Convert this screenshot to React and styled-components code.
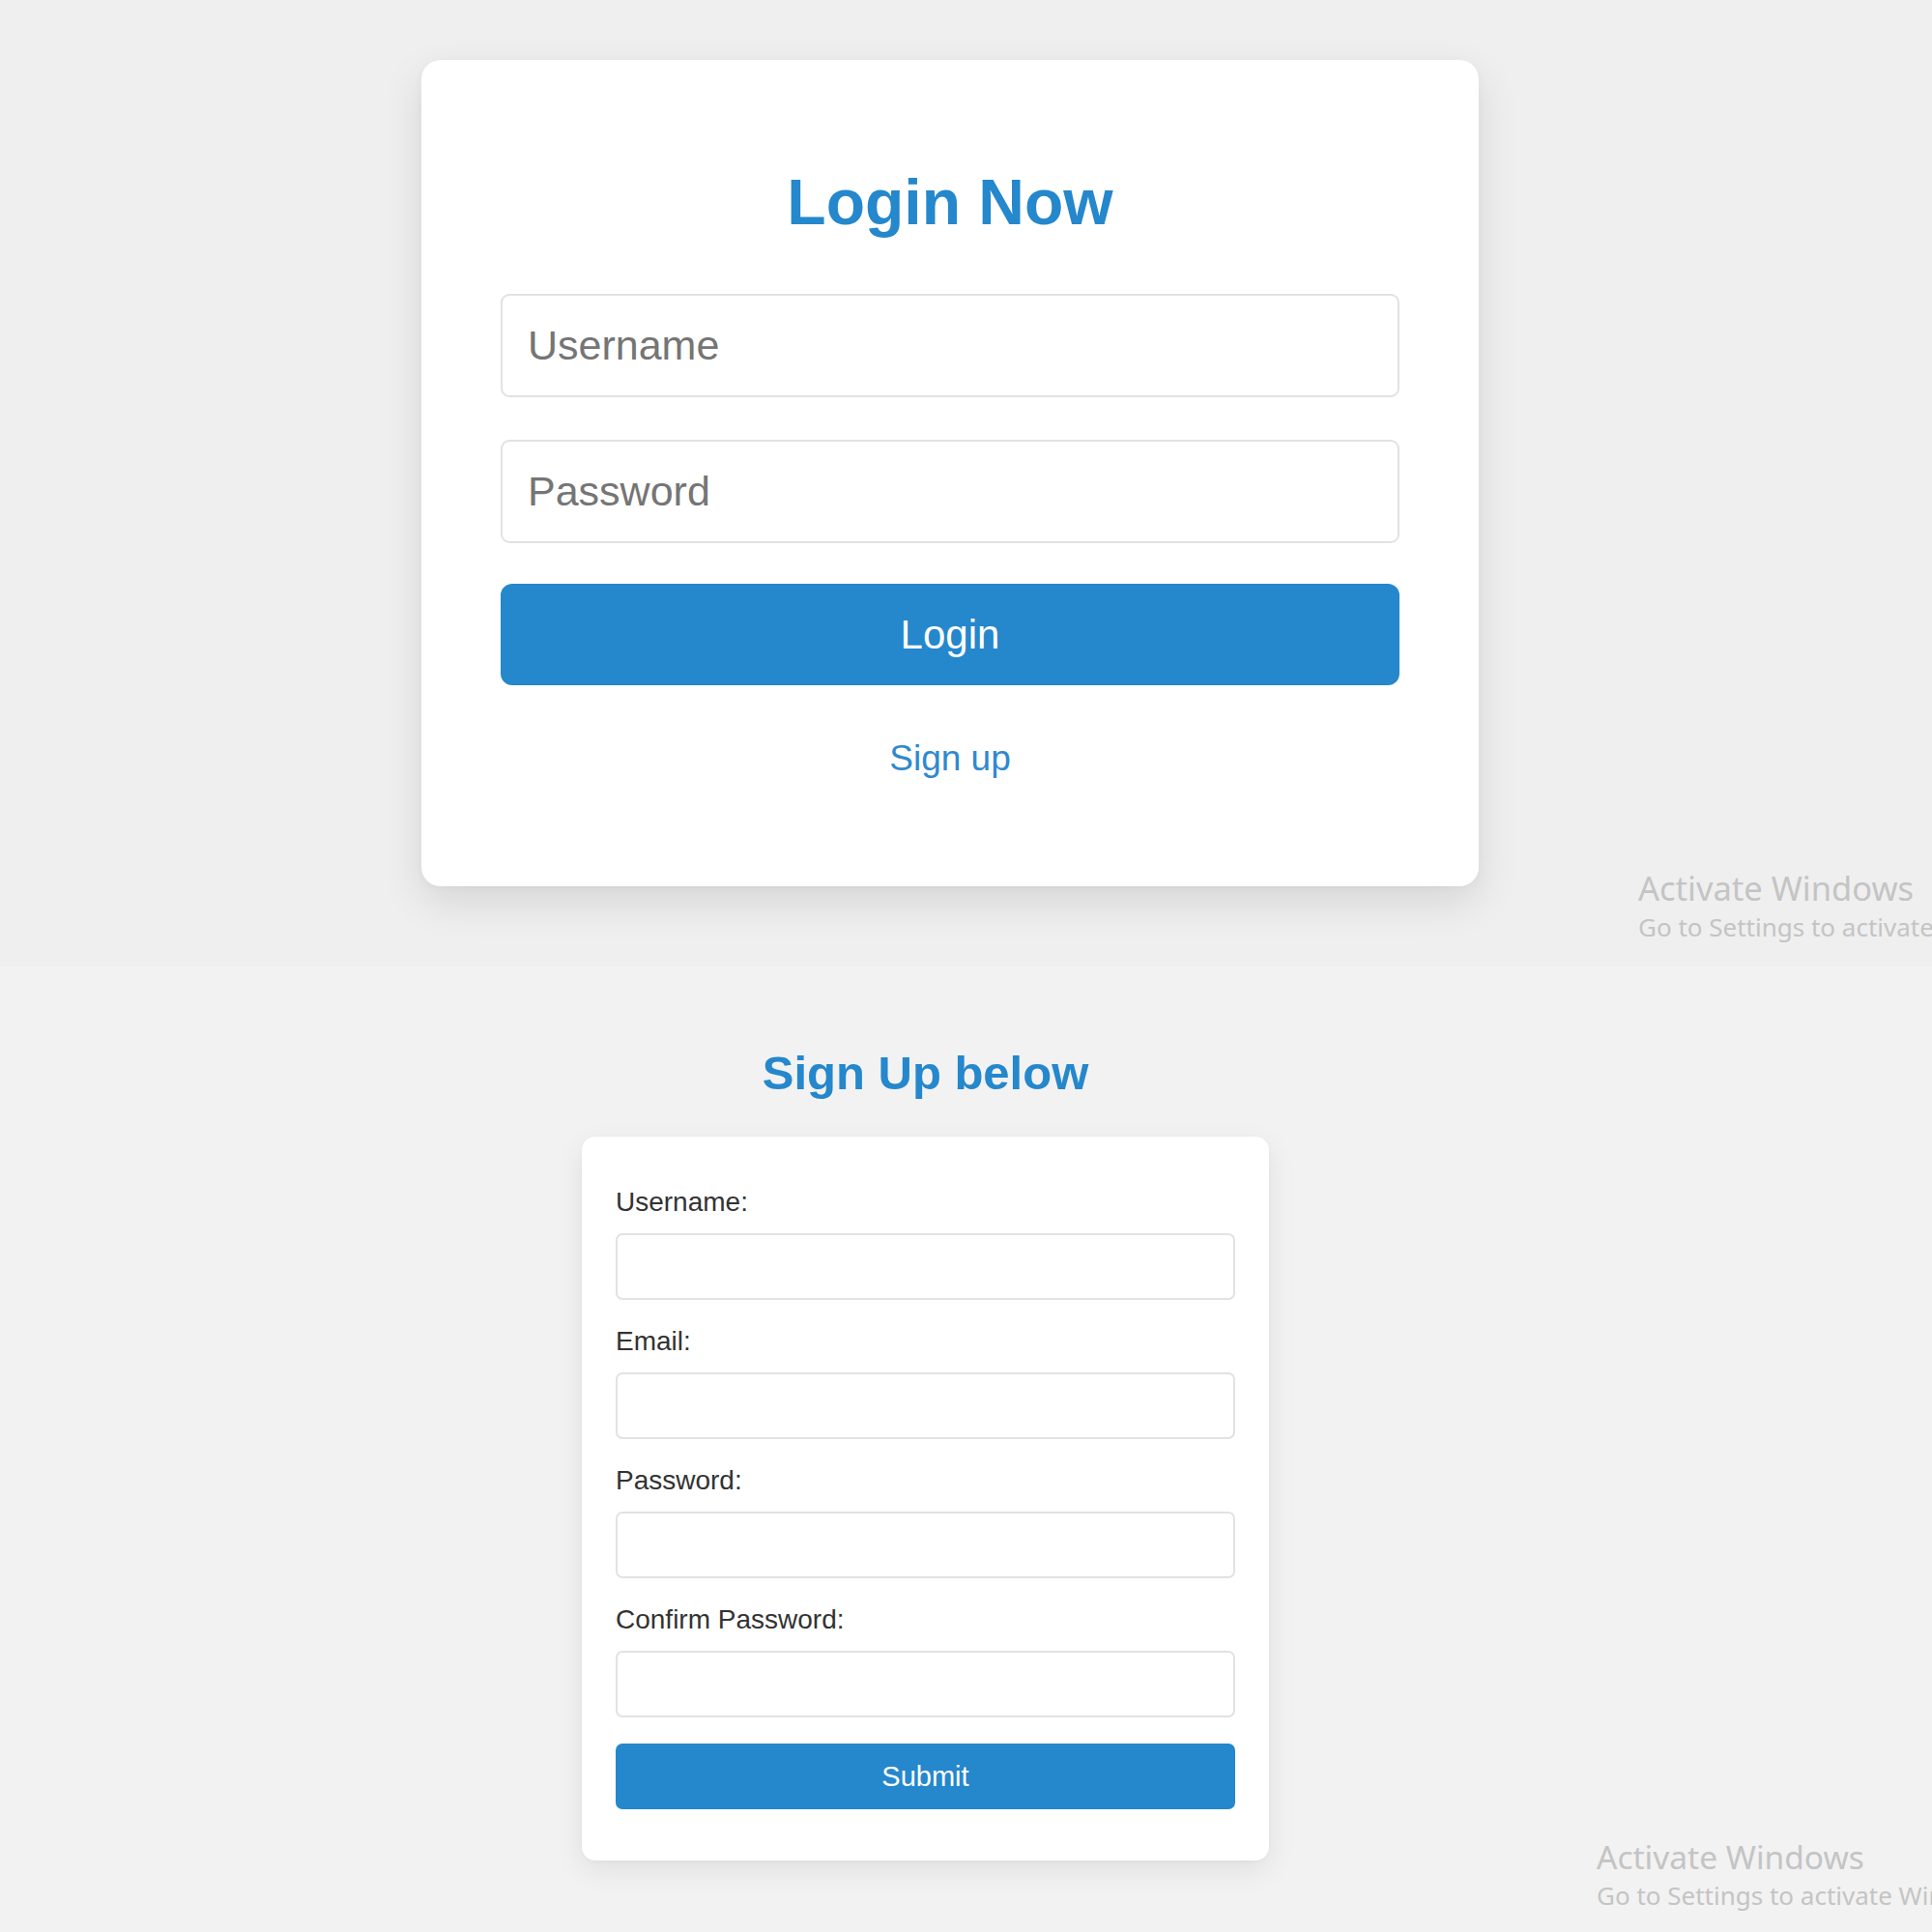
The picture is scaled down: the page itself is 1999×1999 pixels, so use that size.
import React from "react";
import styled, { createGlobalStyle } from "styled-components";

const GlobalStyle = createGlobalStyle`
  html, body {
    margin: 0;
    padding: 0;
    width: 1999px;
    font-family: "Liberation Sans", Arial, sans-serif;
  }
  * { box-sizing: border-box; }
`;

const Page = styled.div`
  width: 1999px;
  display: flex;
  flex-direction: column;
`;

const Section = styled.section`
  position: relative;
  overflow: hidden;
  height: ${(p) => p.$height}px;
  background: ${(p) => p.$bg};
  padding-top: ${(p) => p.$top}px;
  padding-left: ${(p) => p.$left}px;
`;

const LoginCard = styled.div`
  width: 1094px;
  background: #ffffff;
  border-radius: 20px;
  padding: 107px 82px 111px;
  box-shadow: 0 16px 44px rgba(0, 0, 0, 0.11), 0 2px 8px rgba(0, 0, 0, 0.03);
  display: flex;
  flex-direction: column;
`;

const Title = styled.h1`
  margin: 0;
  text-align: center;
  color: #2587cc;
  font-weight: 700;
  font-size: ${(p) => p.$size}px;
  line-height: ${(p) => p.$lh}px;
`;

const LoginForm = styled.form`
  margin-top: 55px;
  display: flex;
  flex-direction: column;
  gap: 44px;
`;

const BigInput = styled.input`
  width: 100%;
  height: 107px;
  border: 2px solid #e2e2e2;
  border-radius: 9px;
  padding: 0 26px;
  font-family: "Liberation Sans", Arial, sans-serif;
  font-size: 43px;
  color: #333;
  background: #fff;
  outline: none;
  &::placeholder { color: #757575; }
`;

const PrimaryButton = styled.button`
  width: 100%;
  height: ${(p) => p.$h}px;
  margin-top: ${(p) => p.$mt}px;
  border: none;
  border-radius: ${(p) => p.$r}px;
  background: #2587cc;
  color: #ffffff;
  font-family: "Liberation Sans", Arial, sans-serif;
  font-size: ${(p) => p.$fs}px;
  cursor: pointer;
  padding: 0;
`;

const SignUpLink = styled.a`
  display: block;
  margin-top: 54px;
  text-align: center;
  color: #2f89cf;
  font-size: 37px;
  line-height: 43px;
  text-decoration: none;
`;

const SignUpColumn = styled.div`
  width: 711px;
  display: flex;
  flex-direction: column;
`;

const SignUpCard = styled.form`
  margin-top: 38px;
  background: #ffffff;
  border-radius: 14px;
  padding: 52px 35px 53px;
  box-shadow: 0 10px 30px rgba(0, 0, 0, 0.08), 0 1px 4px rgba(0, 0, 0, 0.03);
  display: flex;
  flex-direction: column;
`;

const Field = styled.div`
  display: flex;
  flex-direction: column;
  & + & { margin-top: 27px; }
`;

const Label = styled.label`
  font-size: 28px;
  line-height: 32px;
  color: #333333;
  margin-bottom: 16px;
`;

const SmallInput = styled.input`
  width: 100%;
  height: 69px;
  border: 2px solid #e2e2e2;
  border-radius: 7px;
  padding: 0 14px;
  font-family: "Liberation Sans", Arial, sans-serif;
  font-size: 28px;
  background: #fff;
  outline: none;
`;

const Watermark = styled.div`
  position: absolute;
  left: ${(p) => p.$left}px;
  top: ${(p) => p.$top}px;
  font-family: "Noto Sans", "Open Sans", sans-serif;
  color: #c4c4c4;
  white-space: nowrap;
  pointer-events: none;
`;

const WmTitle = styled.div`
  font-size: ${(p) => p.$size}px;
  line-height: 40px;
`;

const WmSub = styled.div`
  margin-top: 4px;
  font-size: 26px;
  line-height: 32px;
`;

const fields = [
  { id: "su-username", label: "Username:", type: "text" },
  { id: "su-email", label: "Email:", type: "email" },
  { id: "su-password", label: "Password:", type: "password" },
  { id: "su-confirm", label: "Confirm Password:", type: "password" },
];

export default function App() {
  return (
    <Page>
      <GlobalStyle />
      <Section $height={1000} $bg="#efefef" $top={62} $left={436}>
        <LoginCard>
          <Title $size={66} $lh={80}>Login Now</Title>
          <LoginForm onSubmit={(e) => e.preventDefault()}>
            <BigInput type="text" placeholder="Username" />
            <BigInput type="password" placeholder="Password" />
          </LoginForm>
          <PrimaryButton type="button" $h={105} $mt={42} $r={12} $fs={42}>
            Login
          </PrimaryButton>
          <SignUpLink href="#signup">Sign up</SignUpLink>
        </LoginCard>
        <Watermark $left={1695} $top={899}>
          <WmTitle $size={34.5}>Activate Windows</WmTitle>
          <WmSub>Go to Settings to activate Windows.</WmSub>
        </Watermark>
      </Section>
      <Section $height={999} $bg="#f2f2f2" $top={82} $left={602}>
        <SignUpColumn>
          <Title $size={49} $lh={56}>Sign Up below</Title>
          <SignUpCard onSubmit={(e) => e.preventDefault()}>
            {fields.map((f) => (
              <Field key={f.id}>
                <Label htmlFor={f.id}>{f.label}</Label>
                <SmallInput id={f.id} type={f.type} />
              </Field>
            ))}
            <PrimaryButton type="submit" $h={68} $mt={27} $r={7} $fs={29}>
              Submit
            </PrimaryButton>
          </SignUpCard>
        </SignUpColumn>
        <Watermark $left={1652} $top={901}>
          <WmTitle $size={33.5}>Activate Windows</WmTitle>
          <WmSub>Go to Settings to activate Windows.</WmSub>
        </Watermark>
      </Section>
    </Page>
  );
}
